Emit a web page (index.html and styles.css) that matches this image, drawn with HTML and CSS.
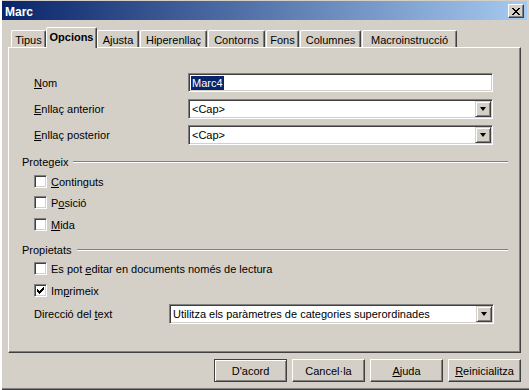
FILE: index.html
```html
<!DOCTYPE html>
<html lang="ca">
  <head>
    <meta charset="UTF-8" />
    <title>Marc</title>
    <link rel="stylesheet" href="styles.css">
  </head>
  <body>
    <div class="window">
      <div class="titlebar">
        <span class="title">Marc</span>
        <button class="close" aria-label="Tanca">
          <svg width="8" height="7" viewBox="0 0 8 7" shape-rendering="crispEdges">
            <path d="M0 0h2v1h-2zM6 0h2v1h-2zM1 1h2v1h-2zM5 1h2v1h-2zM2 2h4v1h-4zM3 3h2v1h-2zM2 4h4v1h-4zM1 5h2v1h-2zM5 5h2v1h-2zM0 6h2v1h-2zM6 6h2v1h-2z" fill="#000"/>
          </svg>
        </button>
      </div>

      <div class="tabs">
        <div class="tab">Tipus</div>
        <div class="tab active">Opcions</div>
        <div class="tab">Ajusta</div>
        <div class="tab">Hiperenllaç</div>
        <div class="tab">Contorns</div>
        <div class="tab">Fons</div>
        <div class="tab">Columnes</div>
        <div class="tab">Macroinstrucció</div>
      </div>

      <div class="panel">
        <div class="row row-first">
          <span class="label"><u>N</u>om</span>
          <div class="field"><span class="selected">Marc4</span></div>
        </div>
        <div class="row row-select">
          <span class="label"><u>E</u>nllaç anterior</span>
          <div class="field combo">
            <span class="value">&lt;Cap&gt;</span>
            <span class="arrow-btn"><span class="arrow"></span></span>
          </div>
        </div>
        <div class="row row-select row-tight">
          <span class="label"><u>E</u>nllaç posterior</span>
          <div class="field combo">
            <span class="value">&lt;Cap&gt;</span>
            <span class="arrow-btn"><span class="arrow"></span></span>
          </div>
        </div>

        <!-- Protegeix -->
        <div class="group-title">Protegeix</div>
        <label class="checkrow checkrow-first"><span class="check"></span><span><u>C</u>ontinguts</span></label>
        <label class="checkrow"><span class="check"></span><span>P<u>o</u>sició</span></label>
        <label class="checkrow checkrow-wide"><span class="check"></span><span><u>M</u>ida</span></label>

        <!-- Propietats -->
        <div class="group-title group-second">Propietats</div>
        <label class="checkrow checkrow-after"><span class="check"></span><span>Es pot <u>e</u>ditar en documents només de lectura</span></label>
        <label class="checkrow checkrow-wide">
          <span class="check">
            <svg width="9" height="9" viewBox="0 0 9 9" shape-rendering="crispEdges">
              <path d="M7 1h1v1h-1zM6 2h2v1h-2zM1 3h1v1h-1zM5 3h3v1h-3zM1 4h2v1h-2zM4 4h3v1h-3zM1 5h5v1h-5zM2 6h3v1h-3zM3 7h1v1h-1z" fill="#000"/>
            </svg>
          </span>
          <span>Im<u>p</u>rimeix</span>
        </label>
        <div class="row row-dir">
          <span class="label label-short">Direcció del <u>t</u>ext</span>
          <div class="field combo field-wide">
            <span class="value">Utilitza els paràmetres de categories superordinades</span>
            <span class="arrow-btn"><span class="arrow"></span></span>
          </div>
        </div>
      </div>

      <div class="actions">
        <button class="button default">D'acord</button>
        <button class="button">Cancel·la</button>
        <button class="button"><u>A</u>juda</button>
        <button class="button"><u>R</u>einicialitza</button>
      </div>
    </div>
  </body>
</html>
```

FILE: styles.css
```css
body {
  margin: 0;
  font-family: "Liberation Sans", Arial, sans-serif;
  font-size: 11px;
  color: #000;
  background-color: #d4d0c8;
}

u {
  text-decoration-thickness: 1px;
  text-underline-offset: 1px;
}

.window {
  width: 529px;
  height: 390px;
  box-sizing: border-box;
  background-color: #d4d0c8;
  box-shadow: inset 2px 0 0 #fff, inset 1px 0 0 #d4d0c8,
    inset 0 -1px 0 #404040, inset 0 -2px 0 #808080;
  overflow: hidden;
}

.titlebar {
  height: 19px;
  margin: 1px 2px 0 2px;
  padding-left: 3px;
  display: flex;
  align-items: center;
  background: linear-gradient(to right, #0a246a, #a6caf0);
  color: #fff;
}

.title {
  font-weight: bold;
  font-size: 12px;
  padding-top: 2px;
}

.close {
  margin-left: auto;
  margin-right: 3px;
  margin-top: 1px;
  width: 16px;
  height: 14px;
  padding: 0;
  display: flex;
  align-items: center;
  justify-content: center;
  background-color: #d4d0c8;
  border: 1px solid;
  border-color: #fff #404040 #404040 #fff;
  box-shadow: inset -1px -1px 0 #808080;
}

/* Tabs */
.tabs {
  height: 27px;
  padding-left: 11px;
  display: flex;
  align-items: flex-end;
}

.tab {
  height: 17px;
  box-sizing: border-box;
  display: flex;
  align-items: center;
  justify-content: center;
  border-top: 1px solid #fff;
  border-left: 1px solid #fff;
  border-right: 1px solid #404040;
  border-radius: 2px 2px 0 0;
  box-shadow: inset -1px 0 0 #808080;
  background-color: #d4d0c8;
  padding-top: 1px;
  margin-right: 1px;
}

.tab:nth-child(1) { width: 35px; margin-right: 0; }
.tab:nth-child(2) { width: 51px; margin-right: 0; }
.tab:nth-child(3) { width: 42px; }
.tab:nth-child(4) { width: 67px; }
.tab:nth-child(5) { width: 57px; }
.tab:nth-child(6) { width: 33px; }
.tab:nth-child(7) { width: 61px; }
.tab:nth-child(8) { width: 95px; }

.tab.active {
  height: 21px;
  margin-bottom: -1px;
  font-weight: bold;
  position: relative;
  z-index: 1;
  padding-top: 0;
  padding-bottom: 2px;
}

/* Panel */
.panel {
  width: 513px;
  height: 306px;
  margin-left: 8px;
  box-sizing: border-box;
  border: 1px solid;
  border-color: #fff #404040 #404040 #fff;
  box-shadow: inset -1px -1px 0 #808080;
  display: flex;
  flex-direction: column;
}

.row {
  display: flex;
  align-items: center;
  padding-left: 25px;
  height: 20px;
}

.row-first {
  margin-top: 25px;
  height: 19px;
}

.row-select {
  margin-top: 7px;
}

.row-tight {
  margin-top: 6px;
}

.row-dir {
  margin-top: 7px;
}

.label {
  width: 154px;
}

.label-short {
  width: 135px;
}

.field {
  width: 305px;
  height: 100%;
  box-sizing: border-box;
  background-color: #fff;
  border: 1px solid;
  border-color: #808080 #fff #fff #808080;
  box-shadow: inset 1px 1px 0 #404040, inset -1px -1px 0 #d4d0c8;
  display: flex;
  align-items: center;
  padding: 1px 1px 1px 2px;
}

.field-wide {
  width: 325px;
}

.selected {
  background-color: #0a246a;
  color: #fff;
  padding: 1px 1px;
  line-height: 12px;
}

.value {
  padding-left: 1px;
  flex: 1;
  white-space: nowrap;
  overflow: hidden;
}

.arrow-btn {
  width: 16px;
  height: 100%;
  box-sizing: border-box;
  margin-left: auto;
  background-color: #d4d0c8;
  border: 1px solid;
  border-color: #d4d0c8 #404040 #404040 #d4d0c8;
  box-shadow: inset 1px 1px 0 #fff, inset -1px -1px 0 #808080;
  display: flex;
  align-items: center;
  justify-content: center;
}

.arrow {
  width: 0;
  height: 0;
  border-left: 3.5px solid transparent;
  border-right: 3.5px solid transparent;
  border-top: 4px solid #000;
}

/* Group headings */
.group-title {
  margin-top: 10px;
  height: 14px;
  padding: 0 12px 0 13px;
  display: flex;
  align-items: center;
}

.group-title::after {
  content: "";
  flex: 1;
  margin-left: 5px;
  border-top: 1px solid #808080;
  border-bottom: 1px solid #fff;
}

.group-second {
  margin-top: 12px;
}

/* Checkboxes */
.checkrow {
  height: 13px;
  margin-top: 8px;
  padding-left: 25px;
  display: flex;
  align-items: center;
  gap: 4px;
}

.checkrow-first {
  margin-top: 6px;
}

.checkrow-wide {
  margin-top: 9px;
}

.checkrow-after {
  margin-top: 5px;
}

.check {
  width: 13px;
  height: 13px;
  box-sizing: border-box;
  background-color: #fff;
  border: 1px solid;
  border-color: #808080 #fff #fff #808080;
  box-shadow: inset 1px 1px 0 #404040, inset -1px -1px 0 #d4d0c8;
  padding: 1px 0 0 1px;
  display: flex;
}

/* Buttons */
.actions {
  margin-top: 6px;
  padding-right: 8px;
  display: flex;
  justify-content: flex-end;
  gap: 5px;
}

.button {
  width: 73px;
  height: 23px;
  padding: 0;
  font-family: inherit;
  font-size: 11px;
  color: #000;
  background-color: #d4d0c8;
  border: 1px solid;
  border-color: #fff #404040 #404040 #fff;
  box-shadow: inset -1px -1px 0 #808080;
}

.button.default {
  border-color: #404040;
  box-shadow: inset 1px 1px 0 #fff, inset -1px -1px 0 #808080;
}
```
